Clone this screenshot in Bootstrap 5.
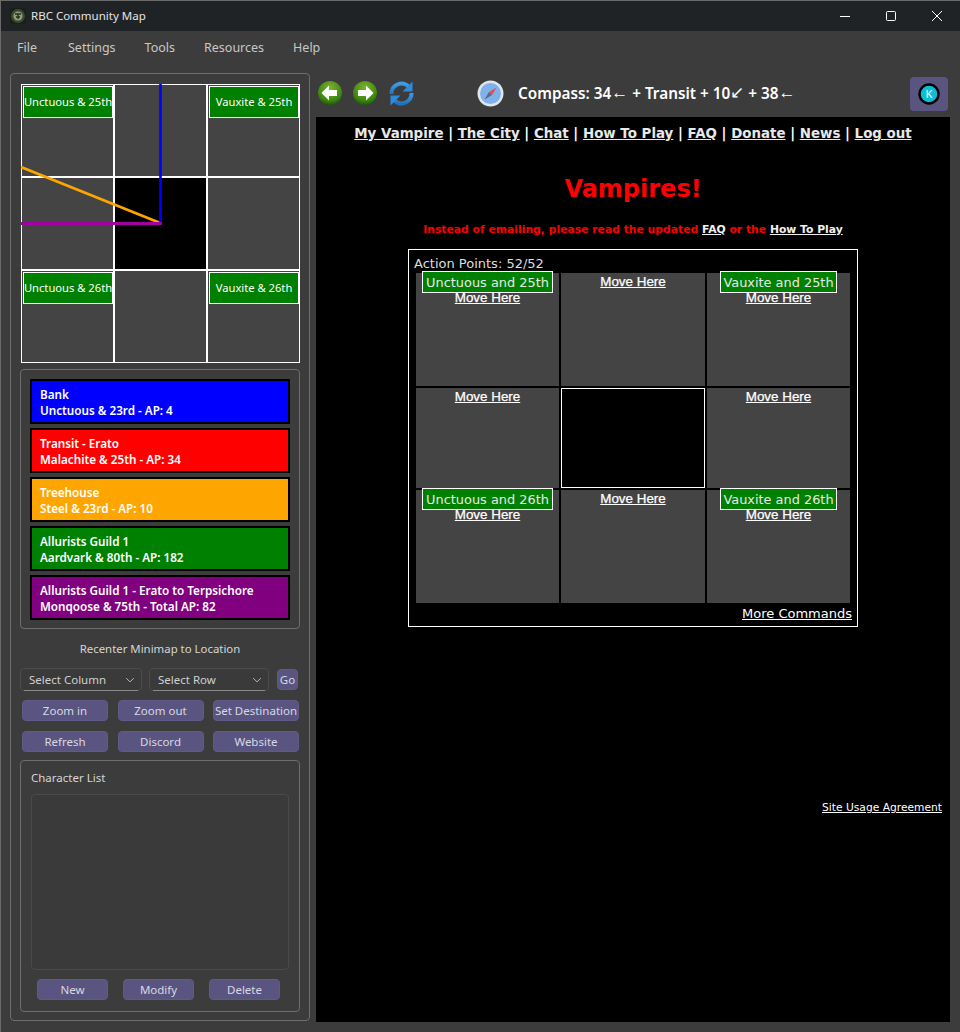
<!DOCTYPE html>
<html lang="en">
<head>
<meta charset="utf-8">
<title>RBC Community Map</title>
<link href="https://cdn.jsdelivr.net/npm/bootstrap@5.3.0/dist/css/bootstrap.min.css" rel="stylesheet">
<style>
html,body{height:100%;margin:0}
body{width:960px;height:1032px;overflow:hidden;background:#3c3c3c;color:#d6d6d6;font-family:"Noto Sans",sans-serif;font-size:12px;border:1px solid #6a6a6a;border-bottom:0;border-right:0}
.win-title{height:30px;background:#1f2326;color:#e4e4e4;font-size:11.5px;padding-left:9px;gap:5px}
.win-ctrl{width:46px;height:30px}
.win-menu{height:35px;font-size:12.5px;color:#c8c8c8;padding-left:16px}
.win-menu span{margin-right:29px}
.win-menu span:first-child{margin-right:31px}
.win-body{height:966px;padding:7px 9px 10px 9px;gap:6px}
.side{width:300px;height:948px;border:1px solid #6e6e6e;border-radius:4px;padding:10px 9px 9px 9px}
.mini{position:relative;width:279px;height:279px;background:#fff;padding:1px;margin-left:1px;display:grid;grid-template-columns:repeat(3,minmax(0,1fr));grid-template-rows:repeat(3,minmax(0,1fr));gap:2px}
.mini-cell{background:#444;padding:1px 0 1px 1px}
.mini-black{background:#000}
.mini-label{background:#008000;border:1px solid #fff;color:#fff;height:32px;font-size:11.2px;white-space:nowrap;overflow:visible}
.mini-lines{position:absolute;left:0;top:0;width:279px;height:279px}
.panel-box{width:280px;border:1px solid #6e6e6e;border-radius:4px}
.legend{height:260px;margin-top:6px;padding:9px 9px 0 9px;gap:4px}
.leg-item{height:45px;border:2px solid #000;color:#fff;font-weight:600;font-size:11.7px;line-height:16px;padding:5px 0 0 8px;white-space:nowrap}
.c-blue{background:#00f}.c-red{background:#f00}.c-orange{background:#ffa500}.c-green{background:#008000}.c-purple{background:#800080}
.recenter{text-align:center;height:39px;padding-top:11px;font-size:11.4px;color:#d6d6d6;width:280px}
.sel-wrap{position:relative}
.sel-wrap::after{content:"";position:absolute;left:4px;right:4px;bottom:0;height:1px;background:#8a8a8a}
.sel-wrap .form-select{height:23px;font-size:11.5px;padding:0 20px 0 8px;background-color:#3a3a3a;color:#d0d0d0;border:1px solid #4c4c4c;border-radius:4px;line-height:21px;background-position:right 5px center;background-size:12px 10px;background-image:url("data:image/svg+xml,%3csvg xmlns='http://www.w3.org/2000/svg' viewBox='0 0 16 16'%3e%3cpath fill='none' stroke='%23ccc' stroke-width='1.4' d='M2 5l6 6 6-6'/%3e%3c/svg%3e")}
.s1{width:122px}.s2{width:120px}
.sel-row{gap:7px;margin-bottom:9px;align-items:center}
.rbtn.btn{background:#595580;border:1px solid #5f5b88;color:#d8d8e6;font-size:11.5px;padding:0;height:21px;line-height:19px;border-radius:4px;white-space:nowrap}
.rbtn-go{width:21px;margin-left:1px}
.b-row{margin-left:2px;width:277px;margin-bottom:10px;justify-content:space-between}
.b-row .rbtn{width:86px}
.chars{height:252px;margin-top:-2px;padding:9px 10px 0 10px}
.chars-title{font-size:11.5px;height:24px;line-height:16px}
.chars-list{height:176px;border:1px solid #4a4a4a;border-radius:4px;background:#3a3a3a}
.chars-btns{padding:9px 9px 0 6px;justify-content:space-between}
.chars-btns .rbtn{width:71px}
.main-col{width:634px}
.toolbar{height:44px;color:#fff}
.tool-ic{width:27px;height:27px;margin-top:-4px}
.tool-rl{margin-left:10px}
.tool-cp{margin-left:62px}
.compass-txt{font-weight:600;font-size:15.300px;color:#fff;white-space:nowrap;margin-left:14px;margin-top:-3px}
.compass-txt i{font-style:normal;font-weight:400;font-size:17px;line-height:0;font-family:"Liberation Sans",sans-serif;position:relative;top:-1px}
.avatar-btn{width:38px;height:34px;background:#595580;border-radius:4px;margin-left:auto;margin-right:2px;margin-top:-3px}
.web{height:905px;background:#000;color:#fff;font-family:"DejaVu Sans",Verdana,sans-serif}
.web a{color:#fff;text-decoration:underline}
.top-links{font-size:13.400px;font-weight:700;text-align:center;padding-top:8px;height:33px;line-height:17px;white-space:nowrap}
.top-links a{color:#e8e8e8}
.vamp{color:#f00;font-size:24px;font-weight:700;text-align:center;margin-top:24px;height:30px;line-height:30px}
.warn{color:#f00;font-size:10.800px;font-weight:700;text-align:center;margin-top:18px;height:15px;line-height:16px;white-space:nowrap}
.warn a{color:#f0f0f0}
.game{width:450px;height:378px;border:1px solid #fff;margin:12px 0 0 92px;padding:0}
.ap{font-size:13px;color:#ddd;padding-left:5px;height:23px;line-height:28px}
.g-grid{display:grid;grid-template-columns:143px 144px 143px;grid-template-rows:113px 100px 113px;gap:2px;margin-left:7px;width:434px}
.g-cell{background:#444;text-align:center;font-family:"Liberation Sans",Arial,sans-serif;padding-top:1px}
.g-cell a{font-size:13.400px;line-height:16px;display:block;font-weight:400;-webkit-text-stroke:.25px #fff}
.g-center{background:#000;border:1px solid #fff}
.g-label{display:inline-block;background:#008000;border:1px solid #fff;color:#e8e8e8;font-family:"DejaVu Sans",Verdana,sans-serif;font-size:12.900px;height:22px;line-height:22px;padding:0 3px;margin-top:-3px;white-space:nowrap;vertical-align:top}
.g-label-v{padding:0 2px}
.g-lab-wrap{height:16px;line-height:0}
.more{font-size:13px;text-align:right;padding:2px 5px 0 0;line-height:17px}
.site{font-size:10.700px;text-align:right;padding-right:8px;margin-top:174px;line-height:14px}
</style>
</head>
<body>
<div class="win-title d-flex align-items-center">
  <svg width="16" height="16" viewBox="0 0 16 16"><rect width="16" height="16" fill="#182018"/><circle cx="8" cy="8" r="7" fill="#3b4a35"/><circle cx="8" cy="8" r="4.600" fill="#8f9c78"/><path d="M5 6h6M6 9h4M8 6v5" stroke="#26301f" stroke-width="1.300"/></svg>
  <span>RBC Community Map</span>
  <div class="ms-auto d-flex">
    <div class="win-ctrl d-flex align-items-center justify-content-center"><svg width="10" height="10" viewBox="0 0 10 10"><path d="M0 5.500h10" stroke="#fff"/></svg></div>
    <div class="win-ctrl d-flex align-items-center justify-content-center"><svg width="10" height="10" viewBox="0 0 10 10"><rect x=".5" y=".5" width="9" height="9" rx="1" fill="none" stroke="#fff"/></svg></div>
    <div class="win-ctrl d-flex align-items-center justify-content-center"><svg width="10" height="10" viewBox="0 0 10 10"><path d="M0 0l10 10M10 0L0 10" stroke="#fff"/></svg></div>
  </div>
</div>
<div class="win-menu d-flex align-items-center"><span>File</span><span>Settings</span><span>Tools</span><span>Resources</span><span>Help</span></div>
<div class="win-body d-flex">
  <div class="side flex-shrink-0">
    <div class="mini">
      <div class="mini-cell"><div class="mini-label d-flex align-items-center justify-content-center">Unctuous &amp; 25th</div></div>
      <div class="mini-cell"></div>
      <div class="mini-cell"><div class="mini-label d-flex align-items-center justify-content-center">Vauxite &amp; 25th</div></div>
      <div class="mini-cell"></div>
      <div class="mini-cell mini-black"></div>
      <div class="mini-cell"></div>
      <div class="mini-cell"><div class="mini-label d-flex align-items-center justify-content-center">Unctuous &amp; 26th</div></div>
      <div class="mini-cell"></div>
      <div class="mini-cell"><div class="mini-label d-flex align-items-center justify-content-center">Vauxite &amp; 26th</div></div>
      <svg class="mini-lines" viewBox="0 0 279 279">
        <line x1="139.500" y1="0" x2="139.500" y2="139" stroke="#0000ff" stroke-width="2.600"/>
        <line x1="0" y1="83" x2="138" y2="138.500" stroke="#ffa500" stroke-width="2.600"/>
        <line x1="0" y1="139.500" x2="141" y2="139.500" stroke="#a000a0" stroke-width="2.800"/>
      </svg>
    </div>
    <div class="panel-box legend d-flex flex-column">
      <div class="leg-item c-blue">Bank<br>Unctuous &amp; 23rd - AP: 4</div>
      <div class="leg-item c-red">Transit - Erato<br>Malachite &amp; 25th - AP: 34</div>
      <div class="leg-item c-orange">Treehouse<br>Steel &amp; 23rd - AP: 10</div>
      <div class="leg-item c-green">Allurists Guild 1<br>Aardvark &amp; 80th - AP: 182</div>
      <div class="leg-item c-purple">Allurists Guild 1 - Erato to Terpsichore<br>Monqoose &amp; 75th - Total AP: 82</div>
    </div>
    <div class="recenter">Recenter Minimap to Location</div>
    <div class="d-flex sel-row">
      <div class="sel-wrap s1"><select class="form-select"><option>Select Column</option></select></div>
      <div class="sel-wrap s2"><select class="form-select"><option>Select Row</option></select></div>
      <button class="btn rbtn rbtn-go" type="button">Go</button>
    </div>
    <div class="d-flex b-row"><button class="btn rbtn" type="button">Zoom in</button><button class="btn rbtn" type="button">Zoom out</button><button class="btn rbtn" type="button">Set Destination</button></div>
    <div class="d-flex b-row"><button class="btn rbtn" type="button">Refresh</button><button class="btn rbtn" type="button">Discord</button><button class="btn rbtn" type="button">Website</button></div>
    <div class="panel-box chars">
      <div class="chars-title">Character List</div>
      <div class="chars-list"></div>
      <div class="d-flex chars-btns"><button class="btn rbtn" type="button">New</button><button class="btn rbtn" type="button">Modify</button><button class="btn rbtn" type="button">Delete</button></div>
    </div>
  </div>
  <div class="main-col flex-shrink-0">
    <div class="toolbar d-flex align-items-center">
      <svg class="tool-ic" viewBox="0 0 27 27"><defs><radialGradient id="gr" cx=".5" cy=".3" r=".75"><stop offset="0" stop-color="#7fb52c"/><stop offset=".7" stop-color="#3d8410"/><stop offset="1" stop-color="#174d06"/></radialGradient><linearGradient id="bl" x1="0" y1="0" x2="0" y2="1"><stop offset="0" stop-color="#3f9be4"/><stop offset="1" stop-color="#2273bf"/></linearGradient></defs><circle cx="14" cy="13" r="12" fill="url(#gr)"/><path d="M5.500 13L13 5.500v4.500h8v6h-8v4.500z" fill="#fff"/></svg>
      <svg class="tool-ic ms-2" viewBox="0 0 27 27"><circle cx="14" cy="13" r="12" fill="url(#gr)"/><path d="M22.500 13L15 5.500v4.500H7v6h8v4.500z" fill="#fff"/></svg>
      <svg class="tool-ic tool-rl" viewBox="0 0 27 27"><g fill="none" stroke="url(#bl)" stroke-width="4"><path d="M3.500 14A10 10 0 0 1 20.500 6.500"/><path d="M23.500 13A10 10 0 0 1 6.500 20.500"/></g><path d="M24.500 1.500v10h-10zM2.500 25.500v-10h10z" fill="#2f8ad8"/></svg>
      <svg class="tool-ic tool-cp" viewBox="0 0 27 27"><circle cx="13.500" cy="13.500" r="13" fill="#dfe6ee"/><circle cx="13.500" cy="13.500" r="10.500" fill="#7fb2ec"/><path d="M19.500 7.500l-7.500 4.500 3 3z" fill="#e84c4c"/><path d="M7.500 19.500l4.500-7.500 3 3z" fill="#5a6a80"/></svg>
      <div class="compass-txt">Compass: 34<i>←</i> + Transit + 10<i>↙</i> + 38<i>←</i></div>
      <div class="avatar-btn d-flex align-items-center justify-content-center"><svg width="22" height="22" viewBox="0 0 22 22"><circle cx="11" cy="11" r="9.500" fill="#10bdd6" stroke="#000" stroke-width="2.400"/><text x="11" y="15" text-anchor="middle" font-size="11" fill="#fff" font-family="Noto Sans">K</text></svg></div>
    </div>
    <div class="web">
      <div class="top-links"><a href="#">My Vampire</a> | <a href="#">The City</a> | <a href="#">Chat</a> | <a href="#">How To Play</a> | <a href="#">FAQ</a> | <a href="#">Donate</a> | <a href="#">News</a> | <a href="#">Log out</a></div>
      <div class="vamp">Vampires!</div>
      <div class="warn">Instead of emailing, please read the updated <a href="#">FAQ</a> or the <a href="#">How To Play</a></div>
      <div class="game">
        <div class="ap">Action Points: 52/52</div>
        <div class="g-grid">
          <div class="g-cell"><div class="g-lab-wrap"><span class="g-label">Unctuous and 25th</span></div><a href="#">Move Here</a></div>
          <div class="g-cell"><a href="#">Move Here</a></div>
          <div class="g-cell"><div class="g-lab-wrap"><span class="g-label g-label-v">Vauxite and 25th</span></div><a href="#">Move Here</a></div>
          <div class="g-cell"><a href="#">Move Here</a></div>
          <div class="g-cell g-center"></div>
          <div class="g-cell"><a href="#">Move Here</a></div>
          <div class="g-cell"><div class="g-lab-wrap"><span class="g-label">Unctuous and 26th</span></div><a href="#">Move Here</a></div>
          <div class="g-cell"><a href="#">Move Here</a></div>
          <div class="g-cell"><div class="g-lab-wrap"><span class="g-label g-label-v">Vauxite and 26th</span></div><a href="#">Move Here</a></div>
        </div>
        <div class="more"><a href="#">More Commands</a></div>
      </div>
      <div class="site"><a href="#">Site Usage Agreement</a></div>
    </div>
  </div>
</div>
<script src="https://cdn.jsdelivr.net/npm/bootstrap@5.3.0/dist/js/bootstrap.bundle.min.js"></script>
</body>
</html>
